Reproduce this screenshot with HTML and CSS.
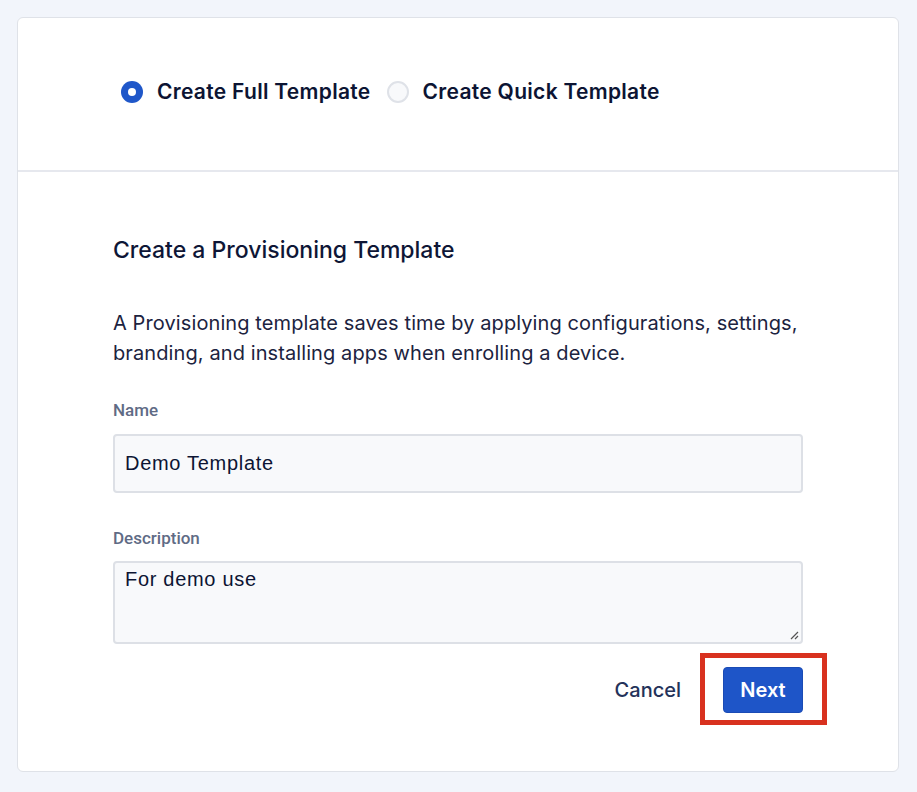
FILE: index.html
```html
<!DOCTYPE html>
<html>
<head>
<meta charset="utf-8">
<link rel="stylesheet" href="styles.css">
</head>
<body>
<div class="page">
  <div class="card">
    <div class="card-head">
      <label class="radio">
        <span class="dot dot-on"></span>
        <span class="radio-text">Create Full Template</span>
      </label>
      <label class="radio">
        <span class="dot dot-off"></span>
        <span class="radio-text">Create Quick Template</span>
      </label>
    </div>
    <div class="card-body">
      <h2 class="title">Create a Provisioning Template</h2>
      <p class="desc">A Provisioning template saves time by applying configurations, settings, branding, and installing apps when enrolling a device.</p>
      <div class="field">
        <div class="label">Name</div>
        <div class="input">Demo Template</div>
      </div>
      <div class="field">
        <div class="label">Description</div>
        <div class="textarea">For demo use
          <svg class="grip" width="9" height="9" viewBox="0 0 9 9"><path d="M8 1 L1 8 M8 5 L5 8" stroke="#555" stroke-width="1.2" fill="none"/></svg>
        </div>
      </div>
      <div class="actions">
        <span class="cancel">Cancel</span>
        <span class="next-wrap">
          <span class="next">Next</span>
          <span class="highlight"></span>
        </span>
      </div>
    </div>
  </div>
</div>
</body>
</html>
```

FILE: styles.css
```css
html, body {
  margin: 0;
  padding: 0;
  background: #f2f5fb;
  font-family: "Inter", "Noto Sans", sans-serif;
  color: #0e1636;
}
.page {
  padding: 17px 18px 20px 17px;
}
.card {
  background: #fff;
  border: 1px solid #dfe2e8;
  border-radius: 6px;
  height: 755px;
  box-sizing: border-box;
  display: flex;
  flex-direction: column;
}
.card-head {
  height: 154px;
  box-sizing: border-box;
  border-bottom: 2px solid #e6e8ee;
  display: flex;
  align-items: center;
  padding-left: 103px;
  padding-bottom: 5px;
  gap: 16px;
}
.radio {
  display: flex;
  align-items: center;
  gap: 14px;
}
.dot {
  width: 22px;
  height: 22px;
  border-radius: 50%;
  box-sizing: border-box;
  display: block;
}
.dot-on {
  background: #1f57c9;
  position: relative;
}
.dot-on::after {
  content: "";
  position: absolute;
  left: 7px;
  top: 7px;
  width: 8px;
  height: 8px;
  border-radius: 50%;
  background: #fff;
}
.dot-off {
  background: #f8f9fb;
  border: 2px solid #dfe2e8;
}
.radio-text {
  font-size: 21px;
  font-weight: 600;
  letter-spacing: 0.3px;
  color: #0c1433;
}
.card-body {
  padding: 63px 95px 0 95px;
}
.title {
  margin: 0;
  font-size: 23px;
  font-weight: 500;
  line-height: 30px;
  color: #0e1636;
}
.desc {
  margin: 43px 0 0 0;
  font-size: 20px;
  letter-spacing: 0.1px;
  line-height: 30px;
  color: #1c2340;
}
.field {
  margin-top: 31px;
}
.field + .field {
  margin-top: 34px;
}
.label {
  font-size: 17px;
  font-weight: 500;
  color: #5f6b85;
  line-height: 22px;
  font-family: "Roboto", "Inter", sans-serif;
}
.input, .textarea {
  margin-top: 13px;
  background: #f8f9fb;
  border: 2px solid #dde0e6;
  border-radius: 4px;
  box-sizing: border-box;
  font-family: "Liberation Sans", Arial, sans-serif;
  font-size: 20px;
  letter-spacing: 0.7px;
  color: #0c1433;
  padding-left: 10px;
}
.input {
  height: 59px;
  display: flex;
  align-items: center;
}
.textarea {
  margin-top: 12px;
  height: 83px;
  padding-top: 5px;
  position: relative;
}
.grip {
  position: absolute;
  right: 2px;
  bottom: 2px;
}
.actions {
  display: flex;
  justify-content: flex-end;
  align-items: center;
  margin-top: 23px;
  gap: 42px;
}
.cancel {
  font-size: 20px;
  font-weight: 500;
  color: #24325a;
}
.next-wrap {
  position: relative;
  display: block;
}
.next {
  display: flex;
  align-items: center;
  justify-content: center;
  width: 80px;
  height: 46px;
  background: #1e55c8;
  border: 1px solid #1a4bb5;
  box-sizing: border-box;
  border-radius: 4px;
  color: #fff;
  font-size: 20px;
  font-weight: 600;
}
.highlight {
  position: absolute;
  left: -23px;
  top: -14px;
  width: 127px;
  height: 72px;
  box-sizing: border-box;
  border: 5px solid #d8311f;
}
```
